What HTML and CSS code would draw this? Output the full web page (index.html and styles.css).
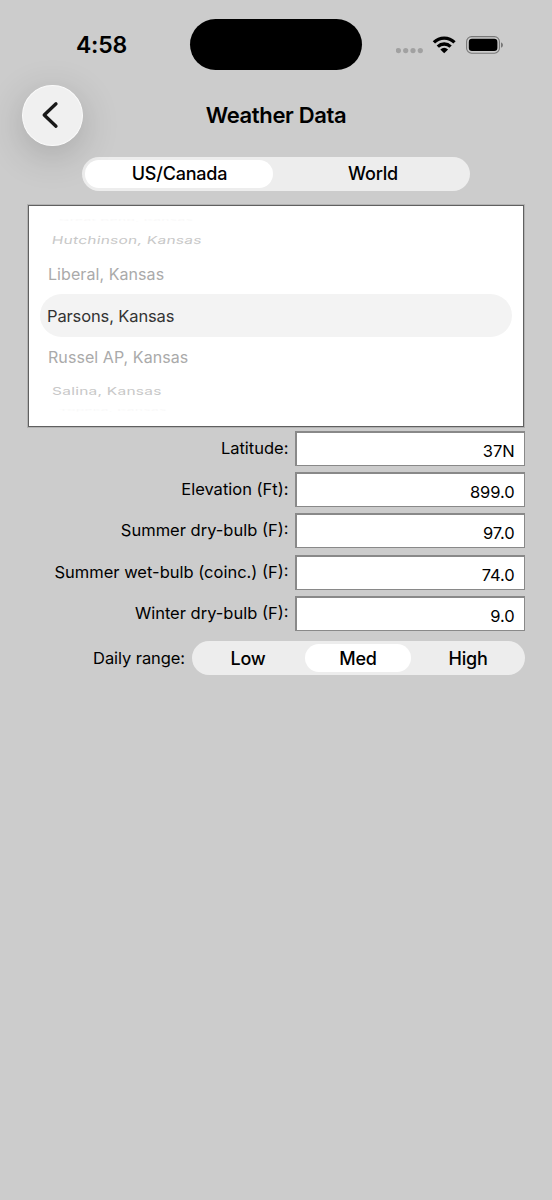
FILE: index.html
```html
<!DOCTYPE html>
<html lang="en">
<head>
<meta charset="utf-8">
<title>Weather Data</title>
<link rel="stylesheet" href="styles.css">
</head>
<body>
<div class="screen">
  <header class="status">
    <div class="time">4:58</div>
    <div class="island"></div>
    <div class="indicators">
      <svg class="dots" width="28" height="6" viewBox="0 0 28 6"><g fill="#a1a1a1"><circle cx="2.4" cy="2.6" r="2.6"/><circle cx="9.7" cy="2.6" r="2.6"/><circle cx="17" cy="2.6" r="2.6"/><circle cx="24.3" cy="2.6" r="2.6"/></g></svg>
      <svg class="wifi" width="24" height="18" viewBox="0 0 24 18"><g fill="none" stroke="#000" stroke-width="3.3"><path d="M1.9 6.4C7.6 .7 16.8 .7 22.5 6.4"/><path d="M5.8 10.6C9.4 7.1 15 7.1 18.6 10.6"/></g><path d="M12.2 17.2 8.3 13.5Q12.2 10.1 16.1 13.5Z"/></svg>
      <svg class="battery" width="38" height="18" viewBox="0 0 38 18"><rect x=".6" y=".6" width="32.8" height="16.6" rx="5" fill="none" stroke="#777" stroke-width="1.1"/><rect x="2.8" y="2.8" width="28.6" height="12.2" rx="3.2"/><path d="M35 6.2Q37 7.1 37 9T35 11.8Z" fill="#777"/></svg>
    </div>
  </header>
  <nav class="nav">
    <button class="back" aria-label="Back"><svg width="18" height="28" viewBox="0 0 18 28"><path d="M15 2.8 3.2 14 15 25.2" fill="none" stroke="#191919" stroke-width="3.3" stroke-linecap="round" stroke-linejoin="round"/></svg></button>
    <h1 class="title">Weather Data</h1>
  </nav>
  <div class="segmented region"><div class="segment selected">US/Canada</div><div class="segment">World</div></div>
  <div class="picker">
    <div class="option edge"><span>Great Bend, Kansas</span></div>
    <div class="option far above"><span>Hutchinson, Kansas</span></div>
    <div class="option near"><span>Liberal, Kansas</span></div>
    <div class="option current"><span>Parsons, Kansas</span></div>
    <div class="option near"><span>Russel AP, Kansas</span></div>
    <div class="option far"><span>Salina, Kansas</span></div>
    <div class="option edge"><span>Topeka, Kansas</span></div>
  </div>
  <main class="form">
    <label class="row"><span class="label">Latitude:</span><span class="field">37N</span></label>
    <label class="row"><span class="label">Elevation (Ft):</span><span class="field">899.0</span></label>
    <label class="row"><span class="label">Summer dry-bulb (F):</span><span class="field">97.0</span></label>
    <label class="row"><span class="label">Summer wet-bulb (coinc.) (F):</span><span class="field">74.0</span></label>
    <label class="row"><span class="label">Winter dry-bulb (F):</span><span class="field">9.0</span></label>
  </main>
  <div class="range"><span class="label daily">Daily range:</span><div class="segmented levels"><div class="segment">Low</div><div class="segment selected">Med</div><div class="segment">High</div></div></div>
</div>
</body>
</html>
```

FILE: styles.css
```css
* { box-sizing: border-box; }
body { margin: 0; background: #ccc; color: #000; font-family: Inter, "Liberation Sans", sans-serif; }
.screen { width: 552px; height: 1200px; overflow: hidden; background: #ccc; }
.status { height: 85px; display: grid; grid-template-columns: 190px 172px 1fr; align-items: start; padding-top: 19px; }
.time { padding: 13px 0 0 76px; font-size: 23px; line-height: 26px; font-weight: 600; letter-spacing: -.2px; }
.island { height: 51px; border-radius: 26px; background: #000; }
.indicators { display: flex; padding: 17px 0 0 34px; }
.dots { margin-top: 12px; }
.wifi { margin-left: 8px; }
.battery { margin-left: 10px; }
.nav { height: 72px; display: grid; grid-template-columns: 60px 1fr 82px; padding-left: 22px; align-items: start; }
.back { width: 60.5px; height: 61px; padding: 0 5px 1px 0; border: 1px solid #fafafa; border-radius: 50%; background: #f0f0f0; display: flex; align-items: center; justify-content: center; box-shadow: 0 9px 38px rgba(0,0,0,.19); }
.title { margin: 17px 0 0; font-size: 22px; line-height: 27px; font-weight: 600; letter-spacing: -.35px; text-align: center; }
.segmented { display: flex; justify-content: space-between; height: 34px; padding: 3px; border-radius: 17px; background: #ededed; }
.segment { display: flex; align-items: center; justify-content: center; font-size: 18px; font-weight: 500; letter-spacing: -.2px; border-radius: 14px; }
.selected { background: #fff; }
.region { width: 388px; margin-left: 82px; }
.region .segment { width: 188px; padding: 0 0 1px 1px; }
.region .segment:last-child { padding-left: 0; }
.picker { width: 496px; height: 222px; margin: 14px 0 0 28px; border: 1px solid #606060; outline: 1px solid rgba(100,100,100,.25); outline-offset: 0; background: #fff; padding: 9px 11px 0; overflow: hidden; }
.option { display: flex; align-items: center; white-space: nowrap; }
.option span { transform-origin: left center; }
.current { height: 43px; border-radius: 22px; background: #f3f3f3; color: #333; font-size: 16.5px; letter-spacing: -.13px; padding-left: 7px; }
.near { height: 40px; padding-left: 8px; color: #aaa; font-size: 16px; letter-spacing: .07px; }
.far { height: 28px; padding-left: 12px; color: #c8c8c8; font-size: 15.5px; letter-spacing: .25px; }
.far span { transform: scaleY(.7); }
.above span { transform: scaleY(.7) skewX(-7deg); }
.edge { height: 11px; padding-left: 19px; color: #f9f9f9; font-size: 14px; line-height: 11px; letter-spacing: .2px; }
.edge span { transform: scaleY(.15); }
.form { display: grid; gap: 6.2px; padding: 4px 27.5px 0 0; }
.row { display: flex; height: 35px; justify-content: flex-end; }
.label { font-size: 16.5px; line-height: 35px; white-space: nowrap; }
.row .label { margin-right: -.5px; }
.field { width: 229.5px; height: 35px; margin-left: 7px; padding: 2px 8px 0 0; border: 2px solid #898989; border-bottom-width: 1px; border-right-width: 1px; background: #fff; text-align: right; font-size: 16.5px; line-height: 32px; letter-spacing: -.1px; padding-right: 9px; }
.range { display: flex; justify-content: flex-end; padding: 10px 27px 0 0; }
.daily { letter-spacing: -.08px; }
.levels { width: 333px; margin-left: 7px; padding-right: 4px; }
.levels .segment { width: 106px; padding-top: 1px; }
```
